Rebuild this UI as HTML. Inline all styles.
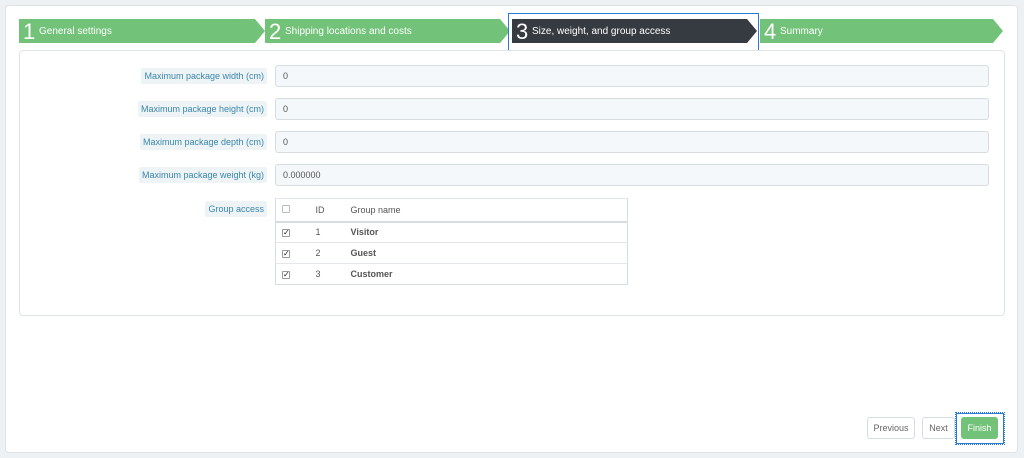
<!DOCTYPE html>
<html><head><style>
*{box-sizing:border-box;margin:0;padding:0}
body{width:1024px;height:458px;background:#eef1f3;font-family:"Liberation Sans",sans-serif;position:relative;overflow:hidden}
.page{position:absolute;left:5px;top:5px;width:1013px;height:448px;background:#fff;border:1px solid #dfe4e7;border-radius:4px}
.step{position:absolute;top:19px;height:24px;background:#72c279;color:#fff;font-size:10px;line-height:24px;clip-path:polygon(0 0,calc(100% - 10px) 0,100% 50%,calc(100% - 10px) 100%,0 100%)}
.step b{font-weight:normal;font-size:22px;position:absolute;left:4px;top:0px;line-height:26px}
.step span{position:absolute;left:20px;top:1px}
.step.act{background:#363a41}
.panel{position:absolute;left:19px;top:50px;width:986px;height:266px;border:1px solid #dfe4e7;border-radius:4px}
.lab{position:absolute;right:757px;font-size:9px;color:#3a87ad;background:#eef3f5;padding:2px 3px;height:16px;line-height:12px;border-radius:2px}
.inp{position:absolute;left:275px;width:714px;height:22px;background:#f4f8fa;border:1px solid #d5dde0;border-radius:3px;font-size:9px;color:#555;line-height:20px;padding-left:7px}
table{position:absolute;left:275px;top:198px;width:353px;border:1px solid #d5dde0;border-collapse:collapse;font-size:9px;color:#555}
td{height:21px;border-top:1px solid #e3e7e9}
tr.h td{height:23px;border-bottom:2px solid #d5dde0}
.cb{width:8px;height:8px;border:1px solid #999;border-radius:1px;display:inline-block;margin-left:6px;font-size:8px;line-height:6px;color:#222}
.btn{position:absolute;top:417px;height:22px;border:1px solid #d5dde0;border-radius:3px;font-size:9px;color:#666;line-height:20px;text-align:center;background:#fff}
</style></head><body>
<div class="page"></div>
<div class="step" style="left:19px;width:246px"><b>1</b><span>General settings</span></div>
<div class="step" style="left:265px;width:245px"><b>2</b><span>Shipping locations and costs</span></div>
<div style="position:absolute;left:508px;top:13px;width:251px;height:38px;border:1px solid #2a7ad2;background:#fff"></div>
<div class="step act" style="left:512px;width:245px"><b>3</b><span>Size, weight, and group access</span></div>
<div class="step" style="left:760px;width:243px"><b>4</b><span>Summary</span></div>
<div class="panel"></div>
<div class="lab" style="top:68px">Maximum package width (cm)</div><div class="inp" style="top:65px">0</div>
<div class="lab" style="top:101px">Maximum package height (cm)</div><div class="inp" style="top:98px">0</div>
<div class="lab" style="top:134px">Maximum package depth (cm)</div><div class="inp" style="top:131px">0</div>
<div class="lab" style="top:167px">Maximum package weight (kg)</div><div class="inp" style="top:164px">0.000000</div>
<div class="lab" style="top:201px">Group access</div>
<table>
<tr class="h"><td style="width:40px"><span class="cb" style="border-color:#bbb"></span></td><td style="width:35px">ID</td><td>Group name</td></tr>
<tr><td><span class="cb">✓</span></td><td>1</td><td><b>Visitor</b></td></tr>
<tr><td><span class="cb">✓</span></td><td>2</td><td><b>Guest</b></td></tr>
<tr><td><span class="cb">✓</span></td><td>3</td><td><b>Customer</b></td></tr>
</table>
<div class="btn" style="left:867px;width:48px">Previous</div>
<div class="btn" style="left:922px;width:33px">Next</div>
<div style="position:absolute;left:955px;top:412px;width:50px;height:33px;border:1px dotted #2a7ad2;outline:1px solid #2a7ad2;outline-offset:-2px"></div>
<div class="btn" style="left:961px;width:37px;background:#72c279;border-color:#72c279;color:#fff">Finish</div>
</body></html>
